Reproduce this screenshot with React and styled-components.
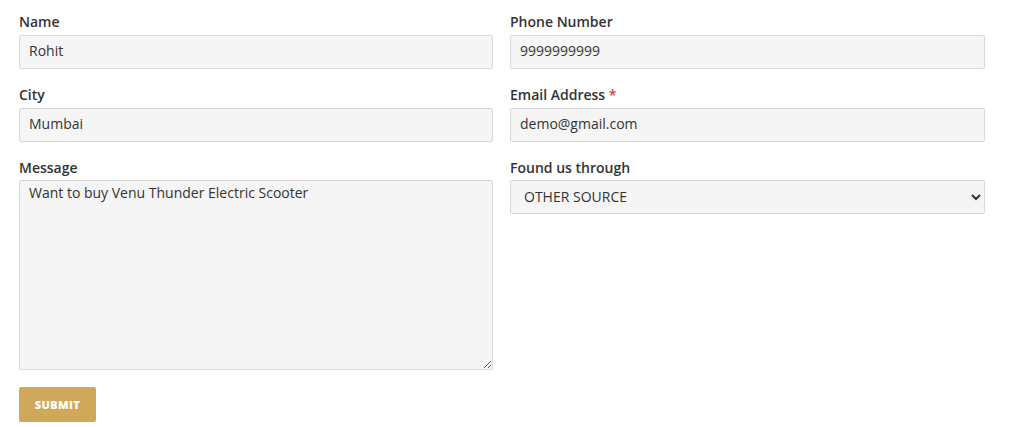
import styled, { createGlobalStyle } from "styled-components";

const GlobalStyle = createGlobalStyle`
  body {
    margin: 0;
    background: #fff;
    font-family: "Open Sans", "Liberation Sans", sans-serif;
    color: #333;
  }
`;

const fieldBase = `
  box-sizing: border-box;
  width: 100%;
  height: 34px;
  padding: 0 9px 3px;
  border: 1px solid #d9d9d9;
  border-radius: 2px;
  background: #f5f5f5;
  font-family: "Open Sans", "Liberation Sans", sans-serif;
  font-size: 14px;
  color: #333;
  outline: none;
`;

const App = () => {
  return (
    <>
      <GlobalStyle />
      <Form onSubmit={(e) => e.preventDefault()}>
        <Grid>
          <Column>
            <Field>
              <Label>Name</Label>
              <Input defaultValue="Rohit" />
            </Field>
            <Field>
              <Label>City</Label>
              <Input defaultValue="Mumbai" />
            </Field>
            <Field $last>
              <Label $short>Message</Label>
              <TextArea
                spellCheck
                defaultValue="Want to buy Venu Thunder Electric Scooter"
              />
            </Field>
          </Column>
          <Column>
            <Field>
              <Label>Phone Number</Label>
              <Input defaultValue="9999999999" />
            </Field>
            <Field>
              <Label>
                Email Address <Required>*</Required>
              </Label>
              <Input defaultValue="demo@gmail.com" />
            </Field>
            <Field $last>
              <Label $short>Found us through</Label>
              <Select defaultValue="other">
                <option value="google">GOOGLE</option>
                <option value="friend">FRIEND</option>
                <option value="other">OTHER SOURCE</option>
              </Select>
            </Field>
          </Column>
        </Grid>
        <SubmitButton type="submit">Submit</SubmitButton>
      </Form>
    </>
  );
};

const Form = styled.form`
  padding: 14px 0 0 19px;
`;

const Grid = styled.div`
  display: grid;
  grid-template-columns: 474px 475px;
  column-gap: 17px;
`;

const Column = styled.div`
  display: flex;
  flex-direction: column;
`;

const Field = styled.div`
  display: flex;
  flex-direction: column;
  margin-bottom: ${(p) => (p.$last ? "17px" : "18px")};
`;

const Label = styled.label`
  display: block;
  height: ${(p) => (p.$short ? "20px" : "21px")};
  font-size: 14px;
  font-weight: 600;
  line-height: 16px;
  color: #333;
`;

const Required = styled.span`
  color: #e03a3a;
`;

const Input = styled.input`
  ${fieldBase}
`;

const TextArea = styled.textarea`
  ${fieldBase}
  height: 190px;
  padding: 2px 9px;
  line-height: 20px;
  resize: vertical;
`;

const Select = styled.select`
  ${fieldBase}
  padding: 0 9px 1px;
  text-transform: uppercase;
`;

const SubmitButton = styled.button`
  width: 77px;
  height: 35px;
  border: none;
  border-radius: 2px;
  background: #cfa85a;
  color: #fff;
  font-family: "Open Sans", "Liberation Sans", sans-serif;
  font-size: 11px;
  font-weight: 800;
  letter-spacing: 0.4px;
  text-transform: uppercase;
  cursor: pointer;
`;

export default App;
